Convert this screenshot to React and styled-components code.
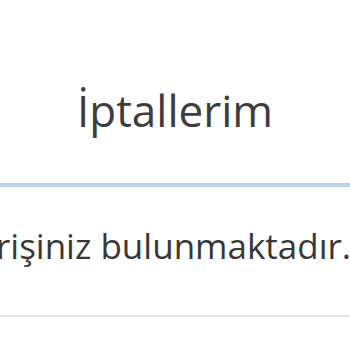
import React from "react";
import styled, { createGlobalStyle } from "styled-components";

const GlobalStyle = createGlobalStyle`
  html, body {
    margin: 0;
    padding: 0;
    background: #ffffff;
  }
  body {
    font-family: "Open Sans", "DejaVu Sans", sans-serif;
    color: #3a3a3a;
    overflow: hidden;
  }
`;

const Page = styled.div`
  width: 350px;
  height: 350px;
  overflow: hidden;
  display: flex;
  flex-direction: column;
`;

const Header = styled.div`
  height: 187px;
  flex-shrink: 0;
  display: flex;
  align-items: flex-start;
  justify-content: center;
  border-bottom: 4px solid #bcd5ec;
  box-sizing: border-box;
`;

const Title = styled.h1`
  margin: 78px 0 0;
  font-size: 44px;
  font-weight: 400;
  line-height: 64px;
  color: #3d3d3d;
`;

const Body = styled.div`
  height: 128px;
  flex-shrink: 0;
  border-bottom: 2px solid #e6e6e6;
  display: flex;
  align-items: flex-start;
  overflow: hidden;
`;

const Message = styled.p`
  margin: 35px 0 0 -4px;
  font-size: 35px;
  line-height: 48px;
  white-space: nowrap;
  color: #383838;
`;

export default function App() {
  return (
    <>
      <GlobalStyle />
      <Page>
        <Header>
          <Title>İptallerim</Title>
        </Header>
        <Body>
          <Message>rişiniz bulunmaktadır.</Message>
        </Body>
      </Page>
    </>
  );
}
